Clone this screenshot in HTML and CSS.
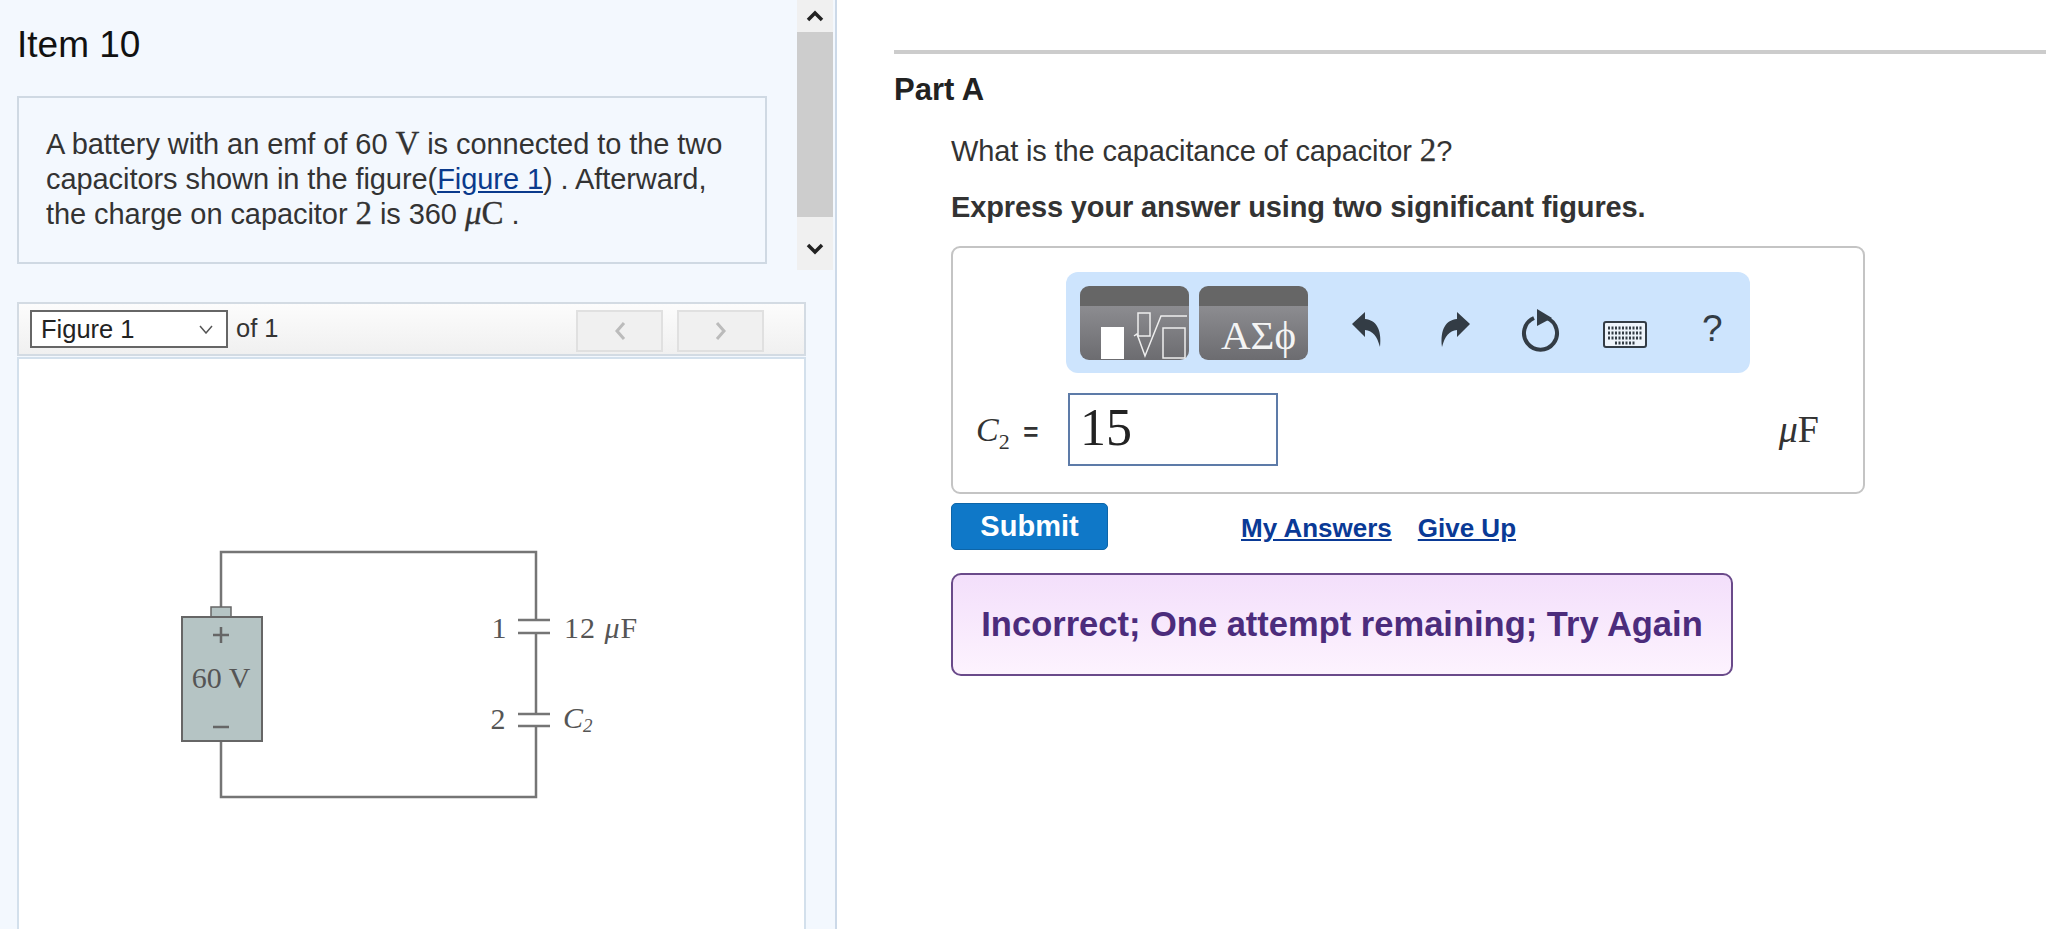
FILE: index.html
```html
<!DOCTYPE html>
<html lang="en">
<head>
<meta charset="utf-8">
<title>Item 10</title>
<link rel="stylesheet" href="styles.css">
</head>
<body>
<div class="page">
  <aside class="left">
    <div class="top-pane">
      <div class="intro">
        <h1 class="item-title">Item 10</h1>
        <div class="problem">
          <p>A battery with an emf of 60 <span class="m">V</span> is connected to the two capacitors shown in the figure(<a href="#">Figure 1</a>) . Afterward, the charge on capacitor <span class="m">2</span> is 360 <span class="m"><i>μ</i>C</span> .</p>
        </div>
      </div>
      <div class="scrollbar">
        <svg class="sb-arrow" width="20" height="14" viewBox="0 0 20 14"><path d="M3 11 L10 4 L17 11" fill="none" stroke="#222" stroke-width="3.5"/></svg>
        <div class="sb-thumb"></div>
        <svg class="sb-arrow" width="20" height="14" viewBox="0 0 20 14"><path d="M3 3 L10 10 L17 3" fill="none" stroke="#222" stroke-width="3.5"/></svg>
      </div>
    </div>
    <div class="fig-bar">
      <div class="select"><span>Figure 1</span><svg width="14" height="9" viewBox="0 0 14 9"><path d="M1 1 L7 8 L13 1" fill="none" stroke="#555" stroke-width="1.5"/></svg></div>
      <span class="of">of 1</span>
      <div class="navs">
        <div class="nav"><svg width="12" height="20" viewBox="0 0 12 20"><path d="M10 2 L3 10 L10 18" fill="none" stroke="#bbb" stroke-width="3"/></svg></div>
        <div class="nav"><svg width="12" height="20" viewBox="0 0 12 20"><path d="M2 2 L9 10 L2 18" fill="none" stroke="#bbb" stroke-width="3"/></svg></div>
      </div>
    </div>
    <div class="fig-panel">
      <svg class="circuit" width="520" height="300" viewBox="0 0 520 300">
        <g fill="none" stroke="#757575" stroke-width="2.5">
          <path d="M71 87 V32 H386 V100 M386 113 V194 M386 206 V277 H71 V221"/>
          <path d="M368 100 H400 M368 113 H400 M368 194 H400 M368 206 H400"/>
        </g>
        <rect x="61" y="87" width="20" height="11" fill="#b5c4c4" stroke="#666" stroke-width="1.5"/>
        <rect x="32" y="97" width="80" height="124" fill="#b5c4c4" stroke="#666" stroke-width="2"/>
        <path d="M63 115 H79 M71 107 V123 M63 207 H79" stroke="#666" stroke-width="2.5"/>
        <g class="ctext">
          <text x="71" y="168" text-anchor="middle">60 V</text>
          <text x="349" y="118" text-anchor="middle">1</text>
          <text x="414" y="118" letter-spacing="1">12 <tspan font-style="italic">μ</tspan>F</text>
          <text x="348" y="209" text-anchor="middle">2</text>
          <text x="413" y="208" font-style="italic">C<tspan class="sub" dy="4">2</tspan></text>
        </g>
      </svg>
    </div>
  </aside>
  <main class="right">
    <div class="rule"></div>
    <h2 class="part">Part A</h2>
    <div class="part-body">
      <p class="question">What is the capacitance of capacitor <span class="m">2</span>?</p>
      <p class="instr">Express your answer using two significant figures.</p>
      <div class="answer-box">
        <div class="toolbar">
          <div class="tb-btn">
            <svg width="108" height="54" viewBox="0 0 108 54">
              <rect x="20" y="21" width="23" height="32" fill="#fff"/>
              <g fill="none" stroke="#eee" stroke-width="1.5">
                <rect x="57" y="7" width="12" height="23"/>
                <path d="M53 30 L56 28 L64 50 L80 10 H106"/>
                <rect x="82" y="22" width="22" height="30"/>
              </g>
            </svg>
          </div>
          <div class="tb-btn"><span class="greek">ΑΣϕ</span></div>
          <svg class="ic ic-undo" width="36" height="38" viewBox="0 0 36 38"><path d="M3 13 L16 1 V8 C27 9 33 18 31 36 C28 25 24 20 16 19 V26 Z" fill="#333c45"/></svg>
          <svg class="ic ic-redo" width="36" height="38" viewBox="0 0 36 38"><path d="M33 13 L20 1 V8 C9 9 3 18 5 36 C8 25 12 20 20 19 V26 Z" fill="#333c45"/></svg>
          <svg class="ic ic-reset" width="40" height="44" viewBox="0 0 40 44"><path d="M14 9 A16.500 16.500 0 1 0 27 9" fill="none" stroke="#333c45" stroke-width="4"/><path d="M17 0 L32 9 L17 17 Z" fill="#333c45"/></svg>
          <svg class="ic ic-kbd" width="44" height="27" viewBox="0 0 44 27"><rect x="1" y="1" width="42" height="25" rx="2" fill="#eef4fb" stroke="#333c45" stroke-width="2"/><path d="M5 7 H39 M5 12 H39 M5 17 H39 M12 22 H32" stroke="#333c45" stroke-width="3" stroke-dasharray="2 1.500"/></svg>
          <span class="help">?</span>
        </div>
        <div class="answer-row">
          <span class="label"><i>C</i><sub>2</sub> <span class="eq">=</span></span>
          <div class="input">15</div>
          <span class="unit"><i>μ</i>F</span>
        </div>
      </div>
      <div class="actions">
        <button class="submit">Submit</button>
        <div class="links"><a href="#">My Answers</a><a href="#">Give Up</a></div>
      </div>
      <div class="feedback">Incorrect; One attempt remaining; Try Again</div>
    </div>
  </main>
</div>
</body>
</html>
```
FILE: styles.css
```css
* { box-sizing: border-box; }
html, body { margin: 0; height: 929px; overflow: hidden; background: #fff; }
body { font-family: "Liberation Sans", Arial, sans-serif; color: #333; }
p, h1, h2 { margin: 0; }
.page { display: flex; height: 929px; }
.m { font-family: "Liberation Serif", serif; font-size: 1.14em; line-height: 0; -webkit-text-stroke: 0.3px currentColor; }

.left { width: 837px; flex: none; background: #f3f8fe; border-right: 2px solid #ccd9e8; padding-right: 2px; }
.top-pane { display: flex; height: 270px; }
.intro { width: 797px; padding-left: 17px; }
.item-title { font-size: 37px; font-weight: 400; color: #111; line-height: 42px; padding-top: 24px; }
.problem { width: 750px; height: 168px; margin-top: 30px; border: 2px solid #cfd9e3; padding: 29px 27px 0 27px; font-size: 29px; line-height: 35px; letter-spacing: -0.07px; color: #333; }
.problem a { color: #0a3a8c; text-decoration: underline; }
.scrollbar { width: 36px; height: 270px; background: #f0f0f0; display: flex; flex-direction: column; align-items: center; }
.sb-arrow { height: 32px; flex: none; }
.sb-thumb { width: 36px; height: 185px; background: #cdcdcd; }
.sb-arrow:last-child { margin-top: 16px; }

.fig-bar { width: 789px; height: 54px; margin: 32px 0 0 17px; border: 2px solid #d3dbe3; background: linear-gradient(#fcfcfc, #f0f0f0); display: flex; align-items: flex-start; padding: 6px 0 0 11px; }
.select { width: 198px; height: 38px; background: #fff; border: 2px solid #666; display: flex; align-items: center; justify-content: space-between; padding: 0 13px 0 9px; font-size: 25.5px; color: #222; }
.of { font-size: 25.5px; color: #333; margin-left: 8px; line-height: 36px; }
.navs { display: flex; gap: 14px; margin-left: auto; margin-right: 40px; }
.nav { width: 87px; height: 42px; background: #f0f0f0; border: 2px solid #e0e0e0; display: flex; align-items: center; justify-content: center; }
.fig-panel { width: 789px; height: 572px; margin: 1px 0 0 17px; background: #fff; border: 2px solid #d3e0ec; border-bottom: 0; }
.circuit { display: block; margin: 161px 0 0 131px; }
.ctext { font-family: "Liberation Serif", serif; font-size: 30px; fill: #555; }
.sub { font-size: 19px; }

.right { flex: 1; padding: 50px 0 0 57px; min-width: 0; }
.rule { height: 4px; background: #ccc; }
.part { font-size: 31px; font-weight: 700; color: #222; line-height: 36px; margin-top: 18px; }
.part-body { padding-left: 57px; width: 971px; }
.question { font-size: 29px; line-height: 36px; margin-top: 25px; letter-spacing: -0.14px; color: #333; }
.instr { font-size: 29px; font-weight: 700; line-height: 36px; margin-top: 20px; letter-spacing: -0.13px; color: #333; }
.answer-box { width: 914px; height: 248px; margin-top: 21px; border: 2px solid #c4c4c4; border-radius: 9px; padding: 24px 0 0 0; }
.toolbar { width: 684px; height: 101px; margin-left: 113px; background: #cde4fd; border-radius: 12px; display: flex; align-items: flex-start; padding: 14px 0 0 14px; }
.tb-btn { width: 109px; height: 74px; border-radius: 9px; background: linear-gradient(#666 0, #666 27%, #8c8c90 27%, #6c6c70 100%); margin-right: 10px; display: flex; align-items: flex-end; justify-content: center; }
.tb-btn svg { display: block; }
.greek { font-family: "Liberation Serif", serif; font-size: 41px; color: #f4f4f4; line-height: 50px; white-space: nowrap; margin-left: 10px; }
.ic { flex: none; display: block; }
.ic-undo { margin: 25px 0 0 31px; }
.ic-redo { margin: 25px 0 0 52px; }
.ic-reset { margin: 23px 0 0 47px; }
.ic-kbd { margin: 35px 0 0 43px; }
.help { font-size: 37px; color: #333c45; line-height: 44px; margin: 21px 0 0 55px; }
.answer-row { display: flex; align-items: center; height: 73px; margin-top: 20px; padding-left: 23px; }
.label { font-family: "Liberation Serif", serif; font-size: 34px; color: #333; width: 92px; flex: none; white-space: nowrap; }
.label sub { font-size: 22px; line-height: 0; }
.eq { font-family: "Liberation Sans", sans-serif; font-size: 26px; font-weight: 700; margin-left: 5px; }
.input { width: 210px; height: 73px; flex: none; border: 2px solid #5d7ba8; font-family: "Liberation Serif", serif; font-size: 52px; line-height: 66px; color: #222; padding-left: 10px; background: #fff; }
.unit { font-family: "Liberation Serif", serif; font-size: 38px; line-height: 44px; color: #333; margin-left: auto; margin-right: 44px; margin-bottom: 2px; }
.actions { display: flex; align-items: flex-start; margin-top: 9px; }
.submit { width: 157px; height: 47px; background: #0f78c8; border: 1px solid #0d65a8; border-radius: 5px; color: #fff; font: 700 29px "Liberation Sans", sans-serif; padding: 0; flex: none; }
.links { display: flex; gap: 26px; margin-left: 133px; font-size: 26px; font-weight: 700; line-height: 50px; }
.links a { color: #0a3a96; text-decoration: underline; }
.feedback { width: 782px; height: 103px; margin-top: 20px; border: 2px solid #6a4a8a; border-radius: 10px; background: linear-gradient(#f3dffb, #fdf3fe); color: #4c2c7c; font-size: 34.5px; font-weight: 700; display: flex; align-items: center; justify-content: center; white-space: nowrap; }
```
